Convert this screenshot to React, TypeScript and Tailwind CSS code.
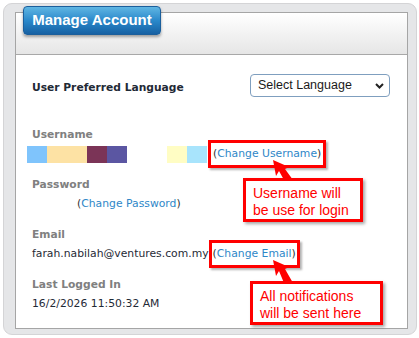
import React from "react";

const body = { fontFamily: '"DejaVu Sans", Verdana, sans-serif' };
const arial = { fontFamily: '"Liberation Sans", Arial, sans-serif' };

function Label({ children, className = "" }: { children: React.ReactNode; className?: string }) {
  return (
    <div className={`text-[10.7px] font-bold leading-[18px] text-[#808080] ${className}`}>{children}</div>
  );
}

function LinkText({ text }: { text: string }) {
  return (
    <span className="text-[#333]">
      (<span className="text-[#2e87c8]">{text}</span>)
    </span>
  );
}

export default function App() {
  return (
    <div className="relative w-[419px] h-[338px] overflow-hidden bg-white pt-[3px] pl-[3px]" style={body}>
      <div className="w-[414px] h-[332px] rounded-[9px] border border-[#d4d4d6] bg-[#e5e6e8] pt-[8px] pl-[11px]">
        <div className="w-[393px] h-[317px] border border-[#a5a5a5] bg-white">
          <div className="h-[42px] border-b border-[#a8a8a8] bg-gradient-to-b from-[#ffffff] to-[#e6e6e6]" />
          <div className="relative pl-[16px] pr-[17px]">
            <div className="flex justify-between items-start pt-[18px]">
              <div className="mt-[6px] text-[10.7px] font-bold leading-[18px] text-[#1f2a36]">User Preferred Language</div>
              <div
                className="mt-[1px] w-[140px] h-[23px] rounded-[4px] border border-[#7f9fbf] bg-white flex items-center justify-between pl-[7px] pr-[5px] text-[12.5px] text-[#1a1a1a]"
                style={arial}
              >
                <span>Select Language</span>
                <svg width="9" height="6" viewBox="0 0 9 6">
                  <path d="M1 1 L4.5 4.5 L8 1" fill="none" stroke="#222" strokeWidth="2" />
                </svg>
              </div>
            </div>

            <Label className="mt-[29px]">Username</Label>
            <div className="flex items-center h-[20px] text-[10.8px] text-[#1f2a36] leading-[20px]">
              <div className="flex ml-[-5px] h-[17px]">
                <div className="w-[20px] bg-[#7fc4fc]" />
                <div className="w-[40px] bg-[#fde2a4]" />
                <div className="w-[20px] bg-[#7b3457]" />
                <div className="w-[20px] bg-[#5b56a2]" />
                <div className="w-[40px] bg-white" />
                <div className="w-[20px] bg-[#fffdc4]" />
                <div className="w-[20px] bg-[#a8e4fc]" />
              </div>
              <span className="ml-[1px] border-[3px] border-[#ff0000] px-[2px] py-[4px] shadow-[2px_2px_2px_rgba(0,0,0,0.3)] leading-[14px]">
                <LinkText text="Change Username" />
              </span>
            </div>

            <Label className="mt-[12px]">Password</Label>
            <div className="text-[10.8px] leading-[20px] pl-[45px]">
              <LinkText text="Change Password" />
            </div>

            <Label className="mt-[12px]">Email</Label>
            <div className="flex items-center h-[20px] text-[10.8px] leading-[20px] text-[#1f2a36]">
              <span>farah.nabilah@ventures.com.my</span>
              <span className="border-[3px] border-[#ff0000] px-[1px] py-[4px] shadow-[2px_2px_2px_rgba(0,0,0,0.3)] leading-[14px]">
                <LinkText text="Change Email" />
              </span>
            </div>

            <Label className="mt-[12px]">Last Logged In</Label>
            <div className="text-[10.8px] leading-[20px] text-[#1f2a36]">16/2/2026 11:50:32 AM</div>
          </div>
        </div>
      </div>

      {/* Title tab */}
      <div
        className="absolute left-[23px] top-[6px] w-[138px] h-[29px] rounded-[4px] border border-[#1b5f9c] bg-gradient-to-b from-[#5fb6e3] via-[#2a89cb] to-[#1761a3] shadow-[0_2px_3px_rgba(0,0,0,0.35)] flex items-center justify-center whitespace-nowrap text-white font-bold text-[15px]"
        style={arial}
      >
        Manage Account
      </div>

      {/* Arrows */}
      <svg className="absolute left-0 top-0" width="419" height="338" viewBox="0 0 419 338">
        <polygon points="273,160 289,167 285,169 293,180 284,180 279,171 276,176" fill="#ff0000" />
        <polygon points="273,260 289,267 285,269 293,283 284,283 279,271 276,276" fill="#ff0000" />
      </svg>

      {/* Callout 1 */}
      <div
        className="absolute left-[243px] top-[178px] w-[120px] h-[44px] border-[3px] border-[#ff0000] bg-white shadow-[2px_2px_3px_rgba(0,0,0,0.35)] pl-[7px] pt-[4px] text-[14px] leading-[17px] text-[#ff0000]"
        style={arial}
      >
        Username will
        <br />
        be use for login
      </div>

      {/* Callout 2 */}
      <div
        className="absolute left-[250px] top-[281px] w-[133px] h-[44px] border-[3px] border-[#ff0000] bg-white shadow-[2px_2px_3px_rgba(0,0,0,0.35)] pl-[7px] pt-[4px] text-[14px] leading-[17px] text-[#ff0000]"
        style={arial}
      >
        All notifications
        <br />
        will be sent here
      </div>
    </div>
  );
}
